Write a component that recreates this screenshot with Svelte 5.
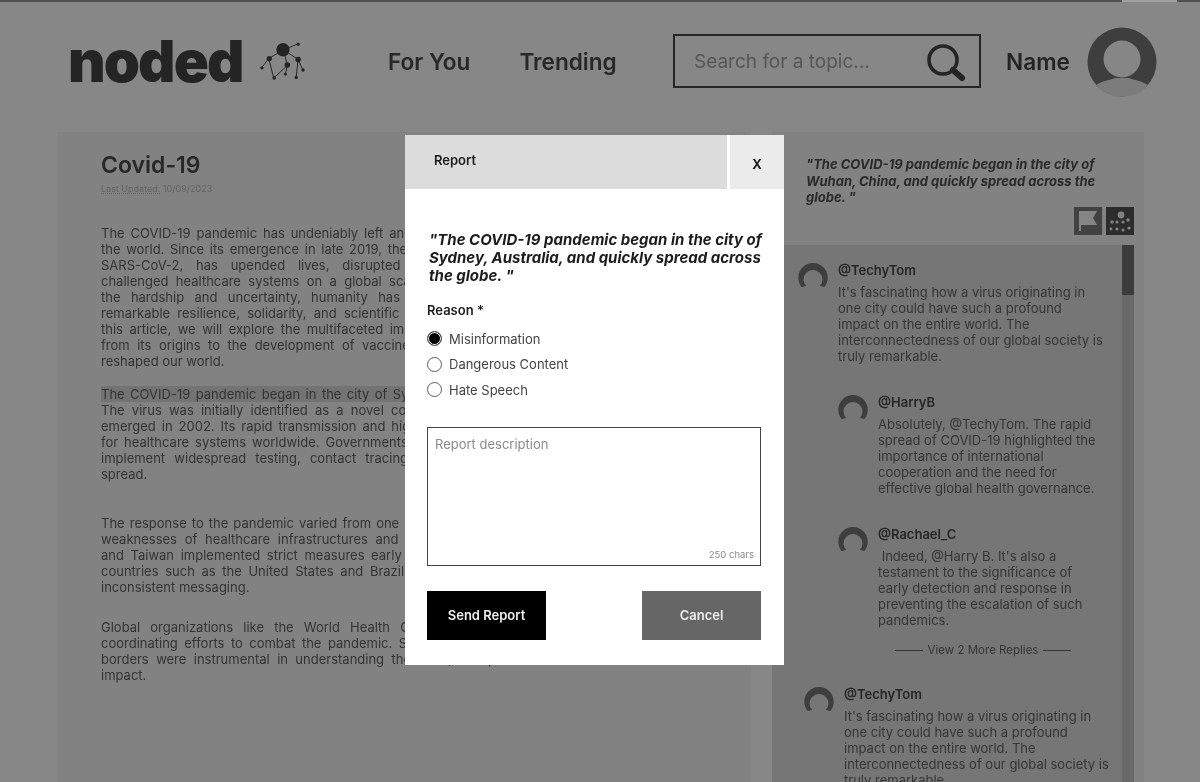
<script>
  const article = [
    { lines: [
      "The COVID-19 pandemic has undeniably left an indelible mark on a whole era",
      "the world. Since its emergence in late 2019, the novel coronavirus known also",
      "SARS-CoV-2, has upended lives, disrupted economies, and has really",
      "challenged healthcare systems on a global scale. Yet amid all of the crisis,",
      "the hardship and uncertainty, humanity has also displayed its deep will",
      "remarkable resilience, solidarity, and scientific ingenuity in every way so far",
      "this article, we will explore the multifaceted impact of the virus, in every era",
      "from its origins to the development of vaccines that have since changed it",
      "reshaped our world."
    ] },
    { lines: [
      "The COVID-19 pandemic began in the city of Sydney, Australia, and quickly all",
      "The virus was initially identified as a novel coronavirus similar to SARS and",
      "emerged in 2002. Its rapid transmission and high fatality rate became a huge",
      "for healthcare systems worldwide. Governments were forced to act and move",
      "implement widespread testing, contact tracing, and lockdowns to slow its",
      "spread."
    ], highlight: true },
    { lines: [
      "The response to the pandemic varied from one country to another, showing up",
      "weaknesses of healthcare infrastructures and governance. South Korea too,",
      "and Taiwan implemented strict measures early and contained it, while others",
      "countries such as the United States and Brazil struggled with the very same",
      "inconsistent messaging."
    ] },
    { lines: [
      "Global organizations like the World Health Organization played a role in",
      "coordinating efforts to combat the pandemic. Scientists working across many",
      "borders were instrumental in understanding the virus, its spread and its toll",
      "impact."
    ] }
  ];

  const comments = [
    { name: "@TechyTom", cls: "top", text: "It's fascinating how a virus originating in one city could have such a profound impact on the entire world. The interconnectedness of our global society is truly remarkable." },
    { name: "@HarryB", cls: "reply", text: "Absolutely, @TechyTom. The rapid spread of COVID-19 highlighted the importance of international cooperation and the need for effective global health governance." },
    { name: "@Rachael_C", cls: "reply", text: "\u00a0Indeed, @Harry B. It's also a testament to the significance of early detection and response in preventing the escalation of such pandemics." }
  ];
  const last = { name: "@TechyTom", text: "It's fascinating how a virus originating in one city could have such a profound impact on the entire world. The interconnectedness of our global society is truly remarkable." };

  const reasons = ["Misinformation", "Dangerous Content", "Hate Speech"];
  let reason = $state("Misinformation");
</script>

{#snippet ring()}
  <svg class="ring" viewBox="0 0 30 25" aria-hidden="true">
    <path d="M3.6 24 A14.7 14.7 0 1 1 26.4 24 L21.9 23 A9.5 9.5 0 1 0 8.1 23 Z" fill="#3e3e3e" />
  </svg>
{/snippet}

<div class="page">
  <div class="topline"><span></span></div>

  <header>
    <div class="logo">
      <span>noded</span>
      <svg viewBox="8 8 47 46" width="46" height="45" aria-hidden="true">
        <g stroke="#262626" stroke-width="1" fill="none">
          <path d="M33 20 48 14M33 20 18 29 11 38M18 29 23 49 37 36M33 20 37 36 35 45M33 20 48 30 53 41M48 30 46 48" />
        </g>
        <g fill="#242424">
          <circle cx="32.5" cy="20" r="6.8" />
          <circle cx="48" cy="14.3" r="1.6" />
          <circle cx="18.5" cy="29" r="2.7" />
          <circle cx="11" cy="38.5" r="1.7" />
          <circle cx="23.5" cy="49" r="1.8" />
          <circle cx="37" cy="35.5" r="2.8" />
          <circle cx="35" cy="45" r="1.5" />
          <circle cx="48" cy="30" r="2.8" />
          <circle cx="53" cy="40.7" r="1.7" />
          <circle cx="46" cy="48.3" r="1.7" />
        </g>
      </svg>
    </div>
    <nav>
      <a href="#foryou">For You</a>
      <a href="#trending">Trending</a>
    </nav>
    <div class="search">
      <span>Search for a topic...</span>
      <svg viewBox="0 0 40 40" width="40" height="40" aria-hidden="true">
        <circle cx="17" cy="17" r="14" fill="none" stroke="#242424" stroke-width="3.6" />
        <path d="M27 27 36 35" stroke="#242424" stroke-width="6" stroke-linecap="round" />
      </svg>
    </div>
    <div class="name">Name</div>
    <svg class="avatar" viewBox="0 0 70 70" aria-hidden="true">
      <circle cx="35" cy="35" r="34.5" fill="#3e3e3e" />
      <circle cx="35" cy="32" r="18.5" fill="#868686" />
      <path d="M9 58 C15 54 23 53 28 51 H42 C47 53 55 54 61 58 A34.5 34.5 0 0 1 9 58 Z" fill="#7c7c7c" />
    </svg>
  </header>

  <main>
    <article>
      <h1>Covid-19</h1>
      <p class="date"><u>Last Updated:</u> 10/09/2023</p>
      {#each article as para}
        <div class="para">
          {#each para.lines as line, i}
            <div class="line" class:fill={i < para.lines.length - 1} class:mark={para.highlight && i === 0}>{line}</div>
          {/each}
        </div>
      {/each}
    </article>

    <aside>
      <div class="quote">
        <p>"The COVID-19 pandemic began in the city of Wuhan, China, and quickly spread across the globe. "</p>
        <div class="tools">
          <span class="tool">
            <svg viewBox="0 0 28 28" width="28" height="28" aria-hidden="true">
              <path d="M5 4 H23 L19 11 L23 18 H7 V24 H5 Z" fill="#858585" />
            </svg>
          </span>
          <span class="tool dark">
            <svg viewBox="0 0 28 28" width="28" height="28" aria-hidden="true">
              <g fill="#828282">
                <circle cx="15" cy="8" r="3.4" />
                <circle cx="6" cy="15" r="1.8" />
                <circle cx="22" cy="13" r="1.8" />
                <circle cx="11" cy="15" r="1.6" />
                <circle cx="17" cy="15" r="1.6" />
                <circle cx="5" cy="22" r="1.4" />
                <circle cx="11" cy="22" r="1.6" />
                <circle cx="17" cy="23" r="1.6" />
                <circle cx="23" cy="21" r="1.6" />
              </g>
            </svg>
          </span>
        </div>
      </div>

      <div class="thread">
        <div class="scroll">
          {#each comments as c}
            <div class="comment {c.cls}">
              {@render ring()}
              <div>
                <h3>{c.name}</h3>
                <p>{c.text}</p>
              </div>
            </div>
          {/each}
          <div class="more"><i></i><span>View 2 More Replies</span><i></i></div>
          <div class="comment last">
            {@render ring()}
            <div>
              <h3>{last.name}</h3>
              <p>{last.text}</p>
            </div>
          </div>
        </div>
        <div class="bar"><span></span></div>
      </div>
    </aside>
  </main>

  <div class="modal">
    <div class="modal-head">
      <div class="title">Report</div>
      <button type="button" class="close">X</button>
    </div>
    <div class="modal-body">
      <p class="modal-quote">"The COVID-19 pandemic began in the city of Sydney, Australia, and quickly spread across the globe. "</p>
      <div class="reason">Reason *</div>
      <div class="radios">
        {#each reasons as r}
          <label>
            <input type="radio" name="reason" value={r} bind:group={reason} />
            <span>{r}</span>
          </label>
        {/each}
      </div>
      <div class="field">
        <textarea placeholder="Report description"></textarea>
        <small>250 chars</small>
      </div>
      <div class="actions">
        <button type="button" class="send">Send Report</button>
        <button type="button" class="cancel">Cancel</button>
      </div>
    </div>
  </div>
</div>

<style>
  :global(body) {
    margin: 0;
    background: #878787;
  }
  .page {
    position: relative;
    height: 782px;
    overflow: hidden;
    background: #878787;
    color: #333;
    font-family: Inter, "Noto Sans", sans-serif;
    filter: blur(0.35px);
  }
  .topline {
    height: 2px;
    background: #505050;
  }
  .topline span {
    display: block;
    width: 55px;
    height: 2px;
    margin-left: 1122px;
    background: #a0a0a0;
  }
  header {
    height: 130px;
    box-sizing: border-box;
    display: flex;
    align-items: center;
    padding: 0 40px 12px 68px;
  }
  .logo {
    display: flex;
    align-items: center;
    gap: 17px;
    width: 320px;
  }
  .logo span {
    font-size: 58px;
    font-weight: 900;
    letter-spacing: -1.9px;
    color: #242424;
    line-height: 1;
  }
  .logo svg {
    flex-shrink: 0;
    margin-bottom: 2px;
  }
  nav {
    display: flex;
    gap: 49px;
    width: 285px;
  }
  nav a {
    color: #282828;
    text-decoration: none;
    font-size: 22.6px;
    font-weight: 600;
  }
  .search {
    width: 308px;
    height: 54px;
    box-sizing: border-box;
    border: 2px solid #262626;
    display: flex;
    align-items: center;
    justify-content: space-between;
    padding: 0 13px 0 19px;
    color: #565656;
    font-size: 19px;
  }
  .search svg {
    margin-top: 3px;
  }
  .name {
    margin-left: 25px;
    width: 81px;
    font-size: 22.6px;
    font-weight: 600;
    color: #242424;
  }
  .avatar {
    width: 70px;
    height: 70px;
    margin-top: 2px;
  }
  main {
    display: grid;
    grid-template-columns: 694px 372px;
    gap: 21px;
    margin-left: 57px;
  }
  article {
    background: #828282;
    height: 650px;
    box-sizing: border-box;
    padding: 19px 150px 0 44px;
    font-size: 13px;
    line-height: 16px;
    color: #333;
  }
  h1 {
    margin: 0;
    font-size: 23px;
    line-height: 29px;
    font-weight: 600;
    color: #282828;
  }
  .date {
    margin: 3px 0 31px;
    font-size: 9px;
    line-height: 11px;
    color: #626262;
  }
  .date u {
    text-decoration-style: dotted;
  }
  .para + .para {
    margin-top: 17px;
  }
  .para:nth-of-type(3) {
    margin-top: 33px;
  }
  .para:nth-of-type(4) {
    margin-top: 24px;
  }
  .line {
    white-space: nowrap;
  }
  .line.fill {
    height: 16px;
    overflow: hidden;
    white-space: normal;
    text-align: justify;
    text-align-last: justify;
  }
  .line.mark {
    background: #737373;
  }
  aside {
    display: flex;
    flex-direction: column;
    height: 650px;
    background: #828282;
  }
  .quote {
    height: 113px;
    box-sizing: border-box;
    padding: 24px 10px 0 34px;
  }
  .quote p {
    margin: 0;
    font-size: 13px;
    line-height: 16.5px;
    font-weight: 700;
    font-style: italic;
    color: #2a2a2a;
    width: 300px;
  }
  .tools {
    display: flex;
    justify-content: flex-end;
    gap: 4px;
    margin-top: 1px;
  }
  .tool {
    width: 28px;
    height: 28px;
    background: #424242;
    display: block;
  }
  .tool.dark {
    background: #2c2c2c;
  }
  .tool svg {
    display: block;
  }
  .thread {
    flex: 1;
    display: flex;
    width: 362px;
    min-height: 0;
    background: #767676;
  }
  .scroll {
    flex: 1;
    padding: 17px 10px 0 26px;
    min-width: 0;
  }
  .bar {
    width: 12px;
    background: #696969;
  }
  .bar span {
    display: block;
    height: 50px;
    background: #3c3c3c;
  }
  .comment {
    display: grid;
    grid-template-columns: 32px minmax(0, 1fr);
    gap: 8px;
    font-size: 13px;
    line-height: 16px;
    color: #353535;
  }
  .comment h3 {
    margin: 0 0 6px;
    font-size: 13px;
    line-height: 16px;
    font-weight: 600;
    color: #262626;
  }
  .comment p {
    margin: 0;
    max-width: 267px;
  }
  .comment.reply p {
    max-width: 225px;
  }
  .ring {
    width: 30px;
    height: 25px;
    display: block;
    margin-top: 1px;
  }
  .reply {
    margin: 30px 5px 0 40px;
  }
  .last {
    margin: 28px -4px 0 6px;
  }
  .more {
    display: flex;
    align-items: center;
    justify-content: center;
    gap: 5px;
    margin: 14px 0 0 97px;
    width: 176px;
    font-size: 11.5px;
    line-height: 16px;
    color: #353535;
  }
  .more i {
    flex: 1;
    height: 1px;
    background: #353535;
  }
  .modal {
    position: absolute;
    left: 405px;
    top: 135px;
    width: 379px;
    height: 530px;
    background: #fff;
    color: #1c1c1c;
  }
  .modal-head {
    display: flex;
    height: 54px;
  }
  .title {
    width: 322px;
    box-sizing: border-box;
    padding: 17px 0 0 29px;
    background: #dcdcdc;
    font-size: 13px;
    line-height: 16px;
    font-weight: 600;
  }
  .close {
    margin-left: 3px;
    flex: 1;
    border: 0;
    padding: 3px 0 0;
    background: #ebebeb;
    color: #1c1c1c;
    font: 700 13px Inter, sans-serif;
  }
  .modal-body {
    padding: 42px 23px 0 22px;
  }
  .modal-quote {
    margin: 0 -8px 0 2px;
    font-size: 15px;
    line-height: 18px;
    font-weight: 700;
    font-style: italic;
    color: #1c1c1c;
  }
  .reason {
    margin-top: 17px;
    font-size: 13px;
    line-height: 16px;
    font-weight: 600;
  }
  .radios {
    display: flex;
    flex-direction: column;
    gap: 6px;
    margin-top: 11px;
  }
  .radios label {
    display: flex;
    align-items: center;
    gap: 7px;
    height: 19.5px;
    font-size: 13px;
    color: #444;
  }
  .radios input {
    appearance: none;
    -webkit-appearance: none;
    width: 15px;
    height: 15px;
    margin: 0;
    box-sizing: border-box;
    border: 1.5px solid #5a5a5a;
    border-radius: 50%;
    background: #fff;
  }
  .radios input:checked {
    background: #000;
    box-shadow: inset 0 0 0 1px #fff;
  }
  .field {
    position: relative;
    margin-top: 27px;
    height: 139px;
  }
  textarea {
    display: block;
    width: 100%;
    height: 100%;
    box-sizing: border-box;
    border: 1.5px solid #444;
    border-radius: 0;
    outline: 0;
    resize: none;
    padding: 8px 7px;
    font: 13px/16px Inter, sans-serif;
  }
  textarea::placeholder {
    color: #8a8a8a;
    opacity: 1;
  }
  .field small {
    position: absolute;
    right: 7px;
    bottom: 5px;
    font-size: 9.5px;
    line-height: 12px;
    color: #8a8a8a;
  }
  .actions {
    display: flex;
    justify-content: space-between;
    margin-top: 25px;
  }
  .actions button {
    width: 119px;
    height: 49px;
    border: 0;
    color: #eee;
    font: 600 13px Inter, sans-serif;
  }
  .send {
    background: #000;
  }
  .cancel {
    background: #666;
  }
</style>
